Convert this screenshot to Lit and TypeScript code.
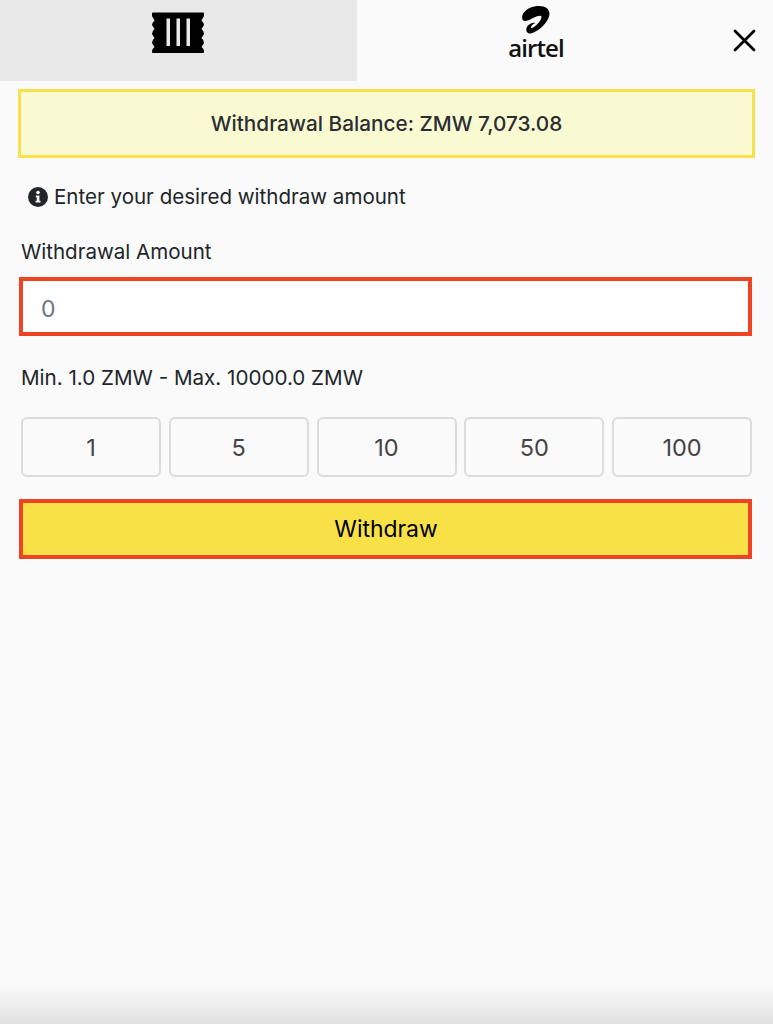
import { LitElement, html, css } from "lit";
import { customElement } from "lit/decorators.js";

@customElement("app-root")
export class AppRoot extends LitElement {
  static styles = css`
    :host {
      display: block;
      position: relative;
      height: 1024px;
      overflow: hidden;
      background: #fafafa;
      color: #212529;
      font-family: Inter, "Liberation Sans", sans-serif;
      font-size: 20.55px;
      line-height: 30px;
    }
    .tabs { display: flex; height: 81px; }
    .tab { display: flex; align-items: center; justify-content: center; }
    .tab-left { width: 357px; background: #e9e9e9; padding-bottom: 16px; padding-right: 1px; box-sizing: border-box; }
    .tab-right { flex: 1; position: relative; }
    .brand { position: absolute; left: 151px; top: 5px; width: 56px; display: flex; flex-direction: column; align-items: center; }
    .brand-text { font-family: "Open Sans", sans-serif; font-weight: 600; font-size: 24px; line-height: 24px; color: #111; letter-spacing: -0.9px; margin-top: 1px; }
    .close { position: absolute; left: 376px; top: 29px; width: 23px; height: 23px; }
    .content { padding: 8px 18px 0; }
    .balance {
      height: 69px; box-sizing: border-box; width: 737px;
      border: 3px solid #f8e14b; background: #fafad2;
      display: flex; align-items: center; justify-content: center;
      font-weight: 500; font-size: 20.75px; color: #2a2e33;
    }
    .info { display: flex; align-items: center; gap: 6px; margin: 24px 0 0 10px; height: 30px; }
    .label { margin: 25px 0 0 3px; height: 30px; }
    .input {
      box-sizing: border-box; height: 59px; width: 733px; margin: 10px 0 0 1px;
      border: 4px solid #ef4423; background: #fff;
      display: flex; align-items: center; padding: 4px 0 0 18px;
      color: #6c757d; font-size: 23px;
    }
    .limits { margin: 26px 0 0 3px; height: 30px; font-size: 20.6px; padding-top: 1px; box-sizing: border-box; }
    .chips { display: grid; grid-template-columns: repeat(5, 140px); column-gap: 7.75px; margin: 25px 0 0 3px; }
    .chip {
      box-sizing: border-box; height: 60px; border: 2px solid #dcdcdc; border-radius: 6px;
      display: flex; align-items: center; justify-content: center; padding-top: 2px;
      color: #444; font-size: 23.5px;
    }
    .submit {
      box-sizing: border-box; height: 60px; width: 733px; margin: 22px 0 0 1px;
      border: 4px solid #ef4423; background: #f7e146;
      display: flex; align-items: center; justify-content: center;
      color: #000; font-size: 22.9px; padding-left: 1px;
    }
    .fade {
      position: absolute; left: 0; right: 0; bottom: 0; height: 42px;
      background: linear-gradient(to bottom, rgba(226,226,226,0), #e2e2e2);
    }
  `;

  render() {
    return html`
      <div class="tabs">
        <div class="tab tab-left">
          <svg width="54" height="41" viewBox="0 0 54 41">
            <path fill="#000" d="M1 1.500Q1 0.500 2 0.500H52Q53 0.500 53 1.500V4L50.500 8.500Q53 11 53 13L50.500 17Q53 19 53 22L50.500 26Q53 28 53 31L50.500 35Q53 37 53 39V40Q53 41 52 41H2Q1 41 1 40V39Q1 37 3.500 35L1 31Q1 28 3.500 26L1 22Q1 19 3.500 17L1 13Q1 11 3.500 8.500L1 4Z"/>
            <rect x="15.500" y="6.500" width="3.500" height="27.500" fill="#e9e9e9"/>
            <rect x="25.500" y="6.500" width="3.500" height="27.500" fill="#e9e9e9"/>
            <rect x="35.500" y="6.500" width="3.500" height="27.500" fill="#e9e9e9"/>
          </svg>
        </div>
        <div class="tab tab-right">
          <div class="brand">
            <svg width="30" height="30" viewBox="0 0 30 30">
              <path fill="#000" d="M2.500 8C5.500 3.500 12 1 18 1C24.500 1 28.500 4 28.500 8.500C28.500 14 23.500 20 18.500 24C14.500 27 10 29 8 28.500C5 27.500 4.500 24 6.500 21C8.500 18.500 12 17 14.500 18C12 19 10 20.500 10 22.500C10.500 24 13.500 22 16 19.500C18.500 17 20.500 13.500 20.500 12C20.500 10.500 18 10.500 15.500 11.500C11.500 13 7.500 16 4 16C0.500 16 0.500 11 2.500 8Z"/>
            </svg>
            <span class="brand-text">airtel</span>
          </div>
          <svg class="close" viewBox="0 0 23 23"><path d="M2 2L21 21M21 2L2 21" stroke="#000" stroke-width="2.800" stroke-linecap="round"/></svg>
        </div>
      </div>
      <div class="content">
        <div class="balance">Withdrawal Balance: ZMW 7,073.08</div>
        <div class="info">
          <svg width="20" height="20" viewBox="0 0 20 20">
            <circle cx="10" cy="10" r="10" fill="#212529"/>
            <circle cx="10" cy="5.500" r="1.800" fill="#fafafa"/>
            <path fill="#fafafa" d="M7.800 8.500H11.400V13.800H12.500V15.500H7.600V13.800H8.800V10.200H7.800Z"/>
          </svg>
          <span>Enter your desired withdraw amount</span>
        </div>
        <div class="label">Withdrawal Amount</div>
        <div class="input">0</div>
        <div class="limits">Min. 1.0 ZMW - Max. 10000.0 ZMW</div>
        <div class="chips">
          ${["1", "5", "10", "50", "100"].map((v) => html`<div class="chip">${v}</div>`)}
        </div>
        <div class="submit">Withdraw</div>
      </div>
      <div class="fade"></div>
    `;
  }
}
